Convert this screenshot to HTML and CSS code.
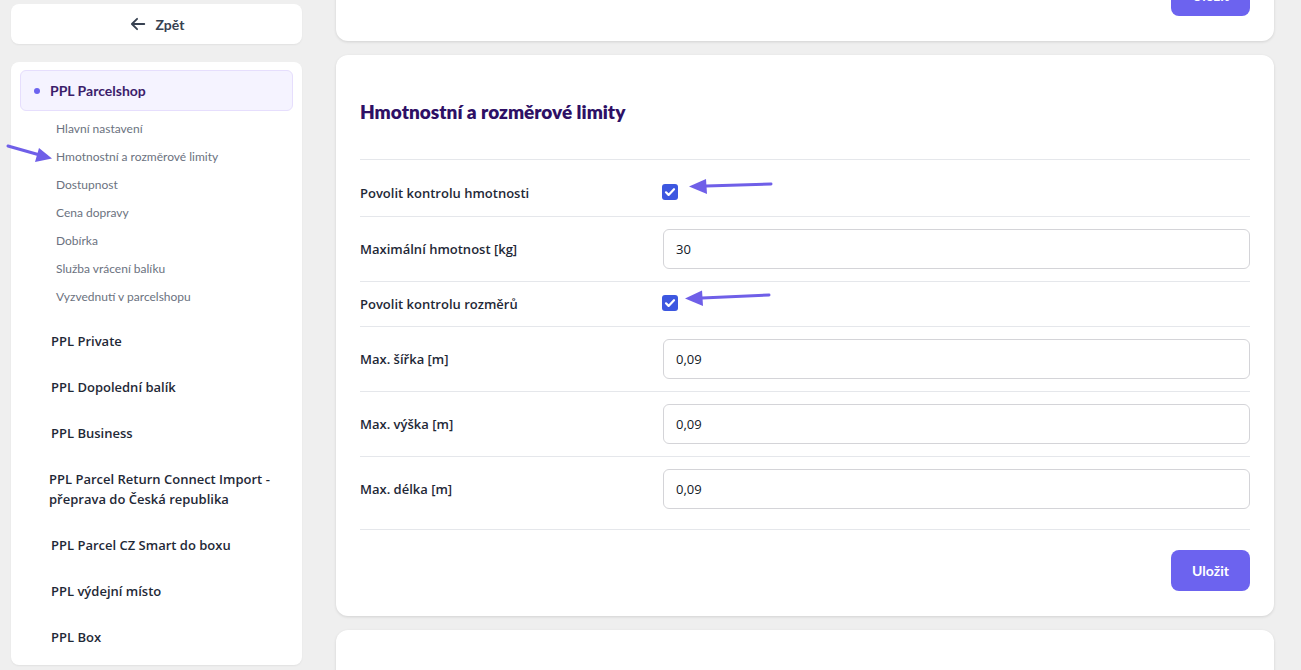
FILE: index.html
```html
<!DOCTYPE html>
<html lang="cs">
<head>
  <meta charset="UTF-8" />
  <meta name="viewport" content="width=device-width, initial-scale=1.0"/>
  <title>PPL Parcelshop - Hmotnostní a rozměrové limity</title>
  <link rel="stylesheet" href="styles.css">
</head>
<body>
  <div class="page">
    <aside class="sidebar">
      <a class="back-card" href="#">
        <svg class="back-icon" viewBox="0 0 20 20" width="18" height="18">
          <path d="M17 10H3.5M9 4.2L3.2 10 9 15.8" fill="none" stroke="#374151" stroke-width="2" stroke-linecap="round" stroke-linejoin="round"/>
        </svg>
        <span>Zpět</span>
      </a>

      <nav class="nav-card">
        <div class="nav-active">
          <span class="dot"></span>
          <span>PPL Parcelshop</span>
        </div>
        <ul class="sub-list">
          <li>Hlavní nastavení</li>
          <li>Hmotnostní a rozměrové limity</li>
          <li>Dostupnost</li>
          <li>Cena dopravy</li>
          <li>Dobírka</li>
          <li>Služba vrácení balíku</li>
          <li>Vyzvednutí v parcelshopu</li>
        </ul>
        <a class="nav-item" href="#">PPL Private</a>
        <a class="nav-item" href="#">PPL Dopolední balík</a>
        <a class="nav-item" href="#">PPL Business</a>
        <a class="nav-item nav-item-wide" href="#">PPL Parcel Return Connect Import - přeprava do Česká republika</a>
        <a class="nav-item" href="#">PPL Parcel CZ Smart do boxu</a>
        <a class="nav-item" href="#">PPL výdejní místo</a>
        <a class="nav-item" href="#">PPL Box</a>
      </nav>
    </aside>

    <main class="content">
      <section class="card card-prev">
        <div class="card-footer">
          <button class="btn-save" type="button">Uložit</button>
        </div>
      </section>

      <section class="card">
        <h2 class="card-title">Hmotnostní a rozměrové limity</h2>
        <form class="limits-form">
          <div class="form-row form-row-check form-row-first">
            <label>Povolit kontrolu hmotnosti</label>
            <span class="check"><svg viewBox="0 0 16 16" width="16" height="16"><path d="M4 8.3l2.6 2.6L12 5.2" fill="none" stroke="#fff" stroke-width="2.2" stroke-linecap="round" stroke-linejoin="round"/></svg></span>
          </div>
          <div class="form-row">
            <label>Maximální hmotnost [kg]</label>
            <input type="text" value="30" />
          </div>
          <div class="form-row form-row-check">
            <label>Povolit kontrolu rozměrů</label>
            <span class="check"><svg viewBox="0 0 16 16" width="16" height="16"><path d="M4 8.3l2.6 2.6L12 5.2" fill="none" stroke="#fff" stroke-width="2.2" stroke-linecap="round" stroke-linejoin="round"/></svg></span>
          </div>
          <div class="form-row">
            <label>Max. šířka [m]</label>
            <input type="text" value="0,09" />
          </div>
          <div class="form-row">
            <label>Max. výška [m]</label>
            <input type="text" value="0,09" />
          </div>
          <div class="form-row form-row-last">
            <label>Max. délka [m]</label>
            <input type="text" value="0,09" />
          </div>
          <div class="card-footer">
            <button class="btn-save" type="submit">Uložit</button>
          </div>
        </form>
      </section>

      <section class="card card-next"></section>
    </main>
  </div>

  <svg class="marks" width="1301" height="670" viewBox="0 0 1301 670">
    <g fill="#6f5fe8" stroke="#6f5fe8" stroke-width="3" stroke-linecap="round">
      <line x1="8" y1="146" x2="38" y2="154.5"/>
      <polygon points="52,158.5 35,162 39,148" stroke="none"/>
      <line x1="771" y1="184" x2="706" y2="186"/>
      <polygon points="689,186.5 706,179 707,194" stroke="none"/>
      <line x1="769" y1="295" x2="702" y2="298"/>
      <polygon points="685,298.5 702,290.5 703,306" stroke="none"/>
    </g>
  </svg>
</body>
</html>
```

FILE: styles.css
```css
body {
  margin: 0;
  background-color: #efefef;
  font-family: "Open Sans", "Noto Sans", sans-serif;
  color: #1f2937;
  overflow: hidden;
}
.page {
  display: flex;
  gap: 34px;
  padding: 4px 27px 0 11px;
}
.sidebar {
  width: 291px;
  flex-shrink: 0;
  display: flex;
  flex-direction: column;
  gap: 18px;
}
.back-card {
  height: 40px;
  background: #fff;
  border-radius: 8px;
  box-shadow: 0 1px 2px rgba(0, 0, 0, 0.06);
  display: flex;
  align-items: center;
  justify-content: center;
  gap: 9px;
  text-decoration: none;
  color: #374151;
  font-family: Lato, sans-serif;
  font-size: 14px;
  font-weight: 700;
}
.nav-card {
  background: #fff;
  border-radius: 8px;
  box-shadow: 0 1px 2px rgba(0, 0, 0, 0.06);
  padding: 8px 9px 5px;
  display: flex;
  flex-direction: column;
}
.nav-active {
  height: 39px;
  background: #f5f3ff;
  border: 1px solid #e6defd;
  border-radius: 6px;
  display: flex;
  align-items: center;
  gap: 10px;
  padding-left: 13px;
  font-family: Lato, sans-serif;
  font-size: 14px;
  font-weight: 700;
  color: #3b1d6b;
}
.dot {
  width: 6px;
  height: 6px;
  border-radius: 50%;
  background: #6c63ef;
}
.sub-list {
  list-style: none;
  margin: 4px 0 7px;
  padding: 0 0 0 36px;
}
.sub-list li {
  height: 28px;
  line-height: 28px;
  font-family: Lato, sans-serif;
  font-size: 12px;
  color: #6b7280;
}
.nav-item {
  box-sizing: border-box;
  min-height: 46px;
  display: flex;
  align-items: center;
  padding-left: 31px;
  padding-right: 12px;
  text-decoration: none;
  font-size: 13px;
  font-weight: 600;
  color: #1f2937;
  line-height: 20px;
}
.nav-item-wide {
  padding: 13px 12px 13px 29px;
}
.content {
  flex: 1;
  margin-top: -53px;
  display: flex;
  flex-direction: column;
  gap: 14px;
}
.card {
  background: #fff;
  border-radius: 12px;
  box-shadow: 0 1px 3px rgba(0, 0, 0, 0.12);
  padding: 0 24px;
}
.card-prev {
  padding-top: 24px;
}
.card-prev .card-footer {
  padding-top: 0;
  border-top: none;
}
.card-title {
  margin: 0;
  padding: 44px 0 34px;
  line-height: 26px;
  font-family: Lato, sans-serif;
  font-size: 19px;
  font-weight: 800;
  color: #2e1065;
  border-bottom: 1px solid #e5e7eb;
}
.form-row {
  display: flex;
  align-items: center;
  padding: 12px 0;
  border-bottom: 1px solid #e5e7eb;
}
.form-row label {
  width: 303px;
  flex-shrink: 0;
  font-size: 13px;
  font-weight: 600;
  color: #1f2937;
}
.form-row input {
  flex: 1;
  height: 40px;
  box-sizing: border-box;
  border: 1px solid #d4d4d8;
  border-radius: 6px;
  padding: 0 12px;
  font-family: "Open Sans", sans-serif;
  font-size: 13px;
  color: #111827;
}
.form-row-check {
  height: 20px;
}
.form-row-first {
  padding-top: 23px;
  padding-bottom: 13px;
}
.form-row-last {
  padding-bottom: 20px;
}
.check {
  width: 16px;
  height: 16px;
  margin-left: -1px;
  margin-top: -2px;
  border-radius: 3px;
  background: #3d57e0;
  display: flex;
}
.card-footer {
  display: flex;
  justify-content: flex-end;
  padding: 20px 0 25px;
}
.btn-save {
  width: 79px;
  height: 41px;
  border: none;
  border-radius: 8px;
  background: #6c63ef;
  color: #fff;
  font-family: Lato, sans-serif;
  font-size: 14px;
  font-weight: 700;
  cursor: pointer;
}
.card-next {
  height: 60px;
}
.marks {
  position: absolute;
  left: 0;
  top: 0;
  pointer-events: none;
}
```
